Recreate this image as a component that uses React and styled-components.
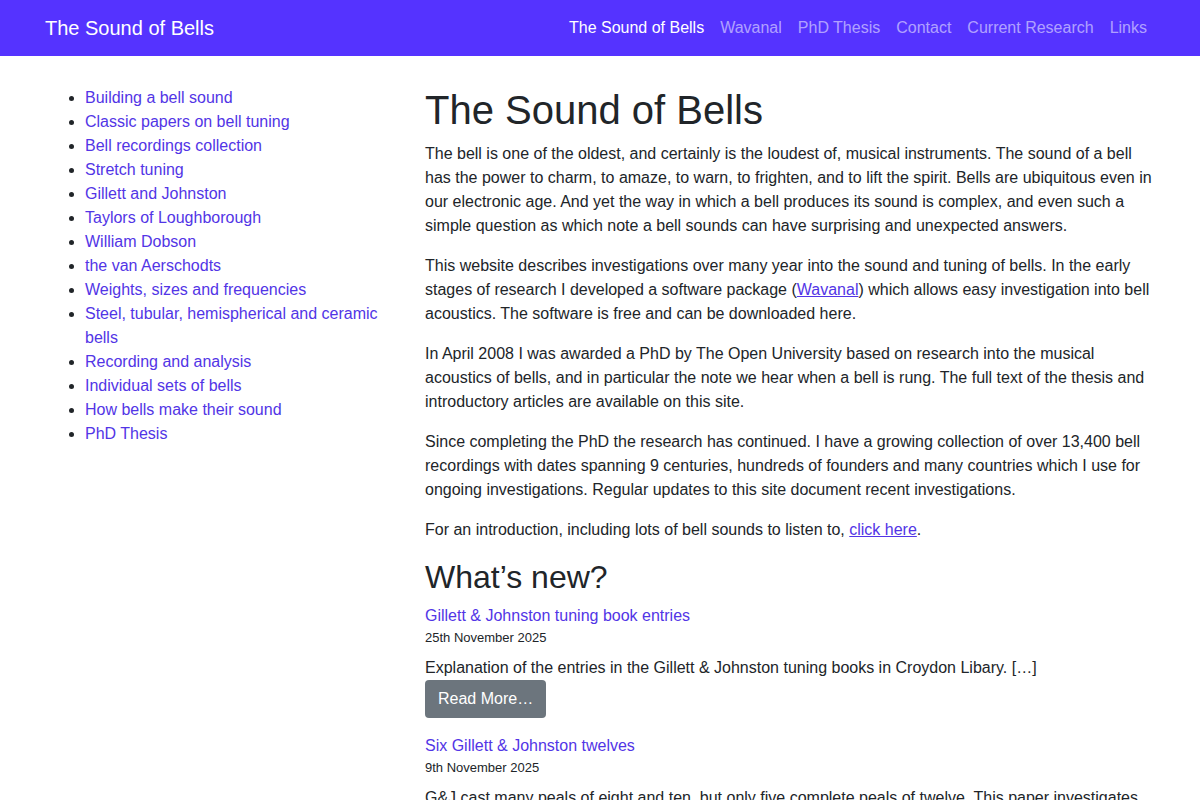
import React from "react";
import styled, { createGlobalStyle } from "styled-components";

const GlobalStyle = createGlobalStyle`
  *, *::before, *::after { box-sizing: border-box; }
  body {
    margin: 0;
    font-family: "Liberation Sans", Arial, sans-serif;
    font-size: 16px;
    line-height: 1.5;
    color: #212529;
    background: #fff;
  }
`;

const Navbar = styled.nav`
  background: #5533ff;
  height: 56px;
`;

const Container = styled.div`
  max-width: 1140px;
  margin: 0 auto;
  padding: 0 15px;
`;

const NavInner = styled(Container)`
  display: flex;
  align-items: center;
  justify-content: space-between;
  height: 56px;
`;

const Brand = styled.a`
  color: #fff;
  font-size: 20px;
  line-height: 30px;
  text-decoration: none;
`;

const NavList = styled.ul`
  display: flex;
  list-style: none;
  margin: 0;
  padding: 0;
`;

const NavLink = styled.a`
  display: block;
  padding: 8px;
  font-size: 16px;
  line-height: 24px;
  text-decoration: none;
  color: ${(p) => (p.$active ? "#fff" : "rgba(255,255,255,0.55)")};
`;

const Row = styled.div`
  display: grid;
  grid-template-columns: 380px 760px;
  margin: 0 -15px;
  padding-top: 30px;
`;

const Col = styled.div`
  padding: 0 15px;
`;

const SideList = styled.ul`
  margin: 0;
  padding-left: 40px;
  li::marker { color: #212529; }
`;

const Link = styled.a`
  color: #5235e6;
  text-decoration: ${(p) => (p.$underline ? "underline" : "none")};
`;

const Title = styled.h1`
  font-size: 40px;
  font-weight: 500;
  line-height: 1.2;
  margin: 0 0 8px;
`;

const Subtitle = styled.h2`
  font-size: 32px;
  font-weight: 500;
  line-height: 1.2;
  margin: 0 0 8px;
`;

const Para = styled.p`
  margin: 0 0 ${(p) => (p.$tight ? "0" : "16px")};
`;

const Post = styled.article`
  margin-bottom: 16px;
`;

const PostDate = styled.div`
  font-size: 13px;
  line-height: 20px;
  margin-bottom: 8px;
`;

const Button = styled.a`
  display: inline-block;
  background: #6c757d;
  color: #fff;
  border-radius: 4px;
  padding: 6px 13px;
  font-size: 16px;
  line-height: 26px;
  text-decoration: none;
`;

const navItems = [
  "The Sound of Bells",
  "Wavanal",
  "PhD Thesis",
  "Contact",
  "Current Research",
  "Links",
];

const sideItems = [
  "Building a bell sound",
  "Classic papers on bell tuning",
  "Bell recordings collection",
  "Stretch tuning",
  "Gillett and Johnston",
  "Taylors of Loughborough",
  "William Dobson",
  "the van Aerschodts",
  "Weights, sizes and frequencies",
  "Steel, tubular, hemispherical and ceramic bells",
  "Recording and analysis",
  "Individual sets of bells",
  "How bells make their sound",
  "PhD Thesis",
];

const posts = [
  {
    title: "Gillett & Johnston tuning book entries",
    date: "25th November 2025",
    text: "Explanation of the entries in the Gillett & Johnston tuning books in Croydon Libary. […]",
    more: true,
  },
  {
    title: "Six Gillett & Johnston twelves",
    date: "9th November 2025",
    text: "G&J cast many peals of eight and ten, but only five complete peals of twelve. This paper investigates the tuning of these and one further twelve. […]",
    more: true,
  },
];

export default function App() {
  return (
    <>
      <GlobalStyle />
      <Navbar>
        <NavInner>
          <Brand href="#">The Sound of Bells</Brand>
          <NavList>
            {navItems.map((n, i) => (
              <li key={n}>
                <NavLink href="#" $active={i === 0}>{n}</NavLink>
              </li>
            ))}
          </NavList>
        </NavInner>
      </Navbar>
      <Container>
        <Row>
          <Col>
            <SideList>
              {sideItems.map((s) => (
                <li key={s}>
                  <Link href="#">{s}</Link>
                </li>
              ))}
            </SideList>
          </Col>
          <Col>
            <Title>The Sound of Bells</Title>
            <Para>
              The bell is one of the oldest, and certainly is the loudest of, musical instruments. The sound of a bell has the power to charm, to amaze, to warn, to frighten, and to lift the spirit. Bells are ubiquitous even in our electronic age. And yet the way in which a bell produces its sound is complex, and even such a simple question as which note a bell sounds can have surprising and unexpected answers.
            </Para>
            <Para>
              This website describes investigations over many year into the sound and tuning of bells. In the early stages of research I developed a software package (<Link href="#" $underline>Wavanal</Link>) which allows easy investigation into bell acoustics. The software is free and can be downloaded here.
            </Para>
            <Para>
              In April 2008 I was awarded a PhD by The Open University based on research into the musical acoustics of bells, and in particular the note we hear when a bell is rung. The full text of the thesis and introductory articles are available on this site.
            </Para>
            <Para>
              Since completing the PhD the research has continued. I have a growing collection of over 13,400 bell recordings with dates spanning 9 centuries, hundreds of founders and many countries which I use for ongoing investigations. Regular updates to this site document recent investigations.
            </Para>
            <Para>
              For an introduction, including lots of bell sounds to listen to, <Link href="#" $underline>click here</Link>.
            </Para>
            <Subtitle>What’s new?</Subtitle>
            {posts.map((p) => (
              <Post key={p.title}>
                <Link href="#">{p.title}</Link>
                <PostDate>{p.date}</PostDate>
                <Para $tight>{p.text}</Para>
                {p.more && <Button href="#">Read More…</Button>}
              </Post>
            ))}
          </Col>
        </Row>
      </Container>
    </>
  );
}
